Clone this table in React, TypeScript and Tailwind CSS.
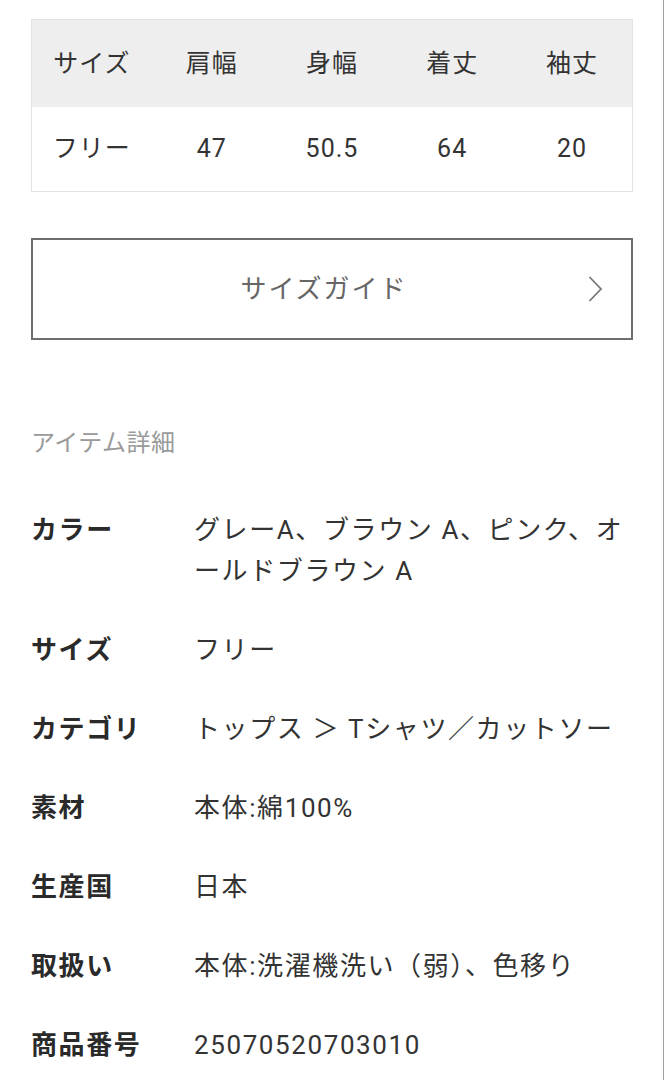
import React from 'react';

const sizeHeaders = ['サイズ', '肩幅', '身幅', '着丈', '袖丈'];
const sizeRow = ['フリー', '47', '50.5', '64', '20'];

const details: { label: string; value: React.ReactNode }[] = [
  {
    label: 'カラー',
    value: (
      <>
        グレーA、ブラウン A、ピンク、オ
        <br />
        ールドブラウン A
      </>
    ),
  },
  { label: 'サイズ', value: 'フリー' },
  { label: 'カテゴリ', value: 'トップス ＞ Tシャツ／カットソー' },
  { label: '素材', value: '本体:綿100%' },
  { label: '生産国', value: '日本' },
  { label: '取扱い', value: '本体:洗濯機洗い（弱）、色移り' },
  { label: '商品番号', value: '25070520703010' },
];

const ChevronRight: React.FC = () => (
  <svg width="16" height="28" viewBox="0 0 16 28" fill="none" className="shrink-0">
    <path d="M2.5 2 L14 14 L2.5 26" stroke="#777" strokeWidth="1.8" />
  </svg>
);

const App: React.FC = () => {
  return (
    <div
      className="relative w-[665px] h-[1080px] overflow-hidden bg-white text-[#333]"
      style={{ fontFamily: "Roboto, 'Noto Sans CJK JP', sans-serif" }}
    >
      <div className="absolute right-[1px] top-0 h-full w-px bg-[#a0a0a0]" />

      <div className="pl-[31px] pr-[32px] pt-[19px]">
        {/* size table */}
        <table className="w-full table-fixed border border-[#e3e3e3] text-[25px] tracking-[1px]">
          <thead className="bg-[#eeeeee]">
            <tr className="h-[87px]">
              {sizeHeaders.map(h => (
                <th key={h} className="font-normal text-center">{h}</th>
              ))}
            </tr>
          </thead>
          <tbody>
            <tr className="h-[85px]">
              {sizeRow.map((v, i) => (
                <td key={i} className="text-center">{v}</td>
              ))}
            </tr>
          </tbody>
        </table>

        {/* size guide button */}
        <button className="mt-[46px] w-full h-[102px] border-2 border-[#6e6e6e] flex items-center pl-[28px] pr-[28px]">
          <span className="flex-1 text-center text-[26px] text-[#666] tracking-[2px]">サイズガイド</span>
          <ChevronRight />
        </button>

        {/* item details */}
        <div className="mt-[86px] text-[24px] text-[#9a9a9a] leading-[34px] tracking-[0.5px]">アイテム詳細</div>

        <div className="mt-[50px] flex flex-col gap-[38px]">
          {details.map(d => (
            <div key={d.label} className="flex text-[26px] leading-[41px] tracking-[1.6px]">
              <div className="w-[163px] shrink-0 font-bold text-[#2a2a2a]">{d.label}</div>
              <div className="text-[#333]">{d.value}</div>
            </div>
          ))}
        </div>
      </div>
    </div>
  );
};

export default App;
